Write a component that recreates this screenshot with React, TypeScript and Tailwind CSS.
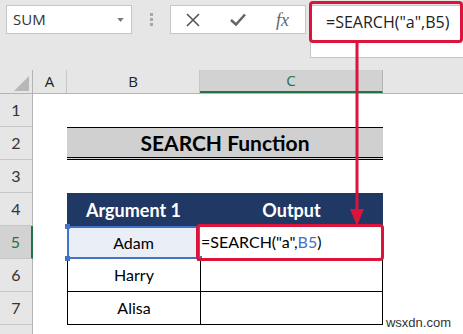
const rows = [1, 2, 3, 4, 5, 6, 7];

const RowHead = ({ n }: { n: number }) => {
  const active = n === 5;
  return (
    <div
      className={
        active
          ? 'w-[33px] h-[33px] shrink-0 flex items-center justify-center bg-[#d2d2d2] border-b border-[#c6c6c6] border-r-2 border-r-[#217346] text-[#217346] text-[16px]'
          : 'w-[33px] h-[33px] shrink-0 flex items-center justify-center bg-[#e6e6e6] border-b border-[#c6c6c6] border-r border-r-[#b4b4b4] text-[#333] text-[16px]'
      }
    >
      {n}
    </div>
  );
};

const Handle = ({ pos }: { pos: string }) => (
  <div className={`absolute w-[5px] h-[5px] bg-[#4472c4] ${pos}`} />
);

const Row = ({ n }: { n: number }) => {
  let content = null;
  if (n === 2) {
    content = (
      <div className="w-[316px] h-[33px] bg-[#d0d0d0] border-t border-black border-b-[3px] border-double flex items-center justify-center font-bold text-[21px] text-black">
        SEARCH Function
      </div>
    );
  } else if (n === 4) {
    content = (
      <div className="w-[316px] h-[33px] bg-[#203864] flex text-white font-bold text-[18px]">
        <div className="w-[133px] flex items-center justify-center pt-[2px]">Argument 1</div>
        <div className="w-[183px] flex items-center justify-center pt-[2px]">Output</div>
      </div>
    );
  } else if (n === 5) {
    content = (
      <div className="flex h-[33px]">
        <div className="relative w-[133px] h-[33px] bg-[#e9eef7] flex items-center justify-center text-[16px] text-black">
          <div className="absolute inset-0 border-2 border-[#4472c4]" />
          <Handle pos="-left-[2px] -top-[2px]" />
          <Handle pos="-left-[2px] -bottom-[2px]" />
          <Handle pos="-right-[2px] -bottom-[2px]" />
          Adam
        </div>
        <div className="w-[183px] h-[33px] border-r border-b border-black flex items-center pl-[1px] text-[16px] text-black">
          =SEARCH("a",<span className="text-[#4472c4]">B5</span>)
        </div>
      </div>
    );
  } else if (n === 6 || n === 7) {
    content = (
      <div className="flex h-[33px]">
        <div className="w-[133px] h-[33px] border-l border-b border-black flex items-center justify-center text-[16px] text-black">
          {n === 6 ? 'Harry' : 'Alisa'}
        </div>
        <div className="w-[183px] h-[33px] border-l border-r border-b border-black" />
      </div>
    );
  }
  return (
    <div className="flex h-[33px]">
      <RowHead n={n} />
      <div className="w-[34px] shrink-0" />
      {content}
    </div>
  );
};

export default function App() {
  return (
    <div className="relative w-[463px] h-[334px] overflow-hidden bg-[#e6e6e6] font-['Lato',sans-serif]">
      {/* formula bar */}
      <div className="h-[70px] flex items-start pt-[5px] pl-[6px] font-['Open_Sans',sans-serif]">
        <div className="w-[126px] h-[29px] bg-white border border-[#c6c6c6] flex items-center justify-between pl-[6px] pr-[7px]">
          <span className="text-[15px] text-[#333]">SUM</span>
          <svg width="7" height="4" viewBox="0 0 8 5">
            <path d="M0 0H8L4 5Z" fill="#7a7a7a" />
          </svg>
        </div>
        <div className="w-[38px] h-[29px] flex flex-col items-center justify-center gap-[2px]">
          <div className="w-[3px] h-[3px] bg-[#a6a6a6]" />
          <div className="w-[3px] h-[3px] bg-[#a6a6a6]" />
          <div className="w-[3px] h-[3px] bg-[#a6a6a6]" />
        </div>
        <div className="w-[136px] h-[29px] bg-white border border-[#c6c6c6] flex items-center">
          <div className="w-[45px] flex justify-center">
            <svg width="14" height="14" viewBox="0 0 14 14">
              <path d="M1 1L13 13M13 1L1 13" stroke="#555" strokeWidth="1.6" />
            </svg>
          </div>
          <div className="w-[46px] flex justify-center">
            <svg width="16" height="13" viewBox="0 0 16 13">
              <path d="M1 7L6 11.5L15 1.5" stroke="#666" strokeWidth="2.6" fill="none" />
            </svg>
          </div>
          <div className="w-[46px] flex justify-center font-['Liberation_Serif',serif] italic text-[18px] text-[#666] leading-none">
            fx
          </div>
        </div>
        <div className="ml-[4px] flex-1 h-[53px] bg-white border border-[#c6c6c6] border-r-0 pl-[15px] pt-[5px] text-[16px] text-[#222] leading-[22px]">
          =SEARCH("a",B5)
        </div>
      </div>

      {/* column headers */}
      <div className="flex h-[24px] border-b border-[#b4b4b4] font-['Open_Sans',sans-serif] text-[15px] text-[#222]">
        <div className="w-[33px] border-r border-[#b4b4b4] flex items-end justify-end pr-[3px] pb-[2px]">
          <svg width="15" height="15" viewBox="0 0 15 15">
            <path d="M15 0V15H0Z" fill="#b8b8b8" />
          </svg>
        </div>
        <div className="w-[34px] border-r border-[#c6c6c6] flex items-center justify-center">A</div>
        <div className="w-[133px] border-r border-[#c6c6c6] flex items-center justify-center">B</div>
        <div className="w-[183px] bg-[#d2d2d2] border-b-2 border-[#217346] border-r border-r-[#b4b4b4] flex items-center justify-center text-[#217346]">
          C
        </div>
        <div className="flex-1" />
      </div>

      {/* sheet */}
      <div className="bg-white">
        {rows.map((n) => (
          <Row key={n} n={n} />
        ))}
        <div className="flex h-[20px]">
          <div className="w-[33px] bg-[#e6e6e6] border-r border-[#b4b4b4]" />
          <div className="flex-1 flex justify-end items-start pr-[12px]">
            <span className="font-['Liberation_Sans',sans-serif] text-[13px] text-[#333] leading-none -mt-[9px]">
              wsxdn.com
            </span>
          </div>
        </div>
      </div>

      {/* annotations */}
      <div className="absolute left-[309px] top-[1px] w-[154px] h-[42px] border-[3px] border-[#dc143c] rounded-[4px]" />
      <div className="absolute left-[196px] top-[224px] w-[188px] h-[37px] border-[3px] border-[#dc143c] rounded-[4px]" />
      <svg className="absolute left-0 top-0 pointer-events-none" width="463" height="334">
        <path d="M357 43V212" stroke="#dc143c" strokeWidth="3" />
        <path d="M350 209H364L357 226Z" fill="#dc143c" />
      </svg>
    </div>
  );
}
